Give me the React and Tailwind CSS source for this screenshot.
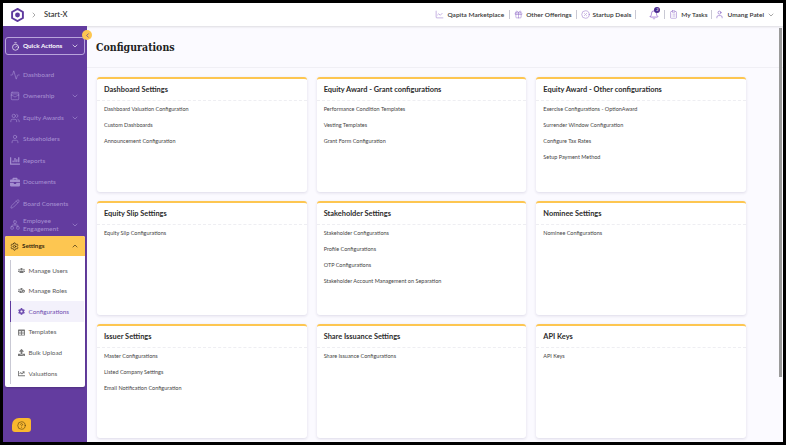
import {
  Activity,
  Bell,
  ChevronDown,
  ChevronLeft,
  ChevronRight,
  ChevronUp,
  CircleHelp,
  ClipboardList,
  Gift,
  LineChart,
  Network,
  Pencil,
  PercentCircle,
  Settings,
  Timer,
  User,
  Users,
  WalletCards,
} from "lucide-react";
import { FaBriefcase, FaChartBar, FaChartLine, FaCog, FaTable, FaUpload, FaUsers, FaUsersCog } from "react-icons/fa";

const navItems = [
  { label: "Dashboard", icon: Activity },
  { label: "Ownership", icon: WalletCards, chevron: true },
  { label: "Equity Awards", icon: Users, chevron: true },
  { label: "Stakeholders", icon: User },
  { label: "Reports", icon: FaChartBar },
  { label: "Documents", icon: FaBriefcase },
  { label: "Board Consents", icon: Pencil },
];

const subItems = [
  { label: "Manage Users", icon: FaUsers },
  { label: "Manage Roles", icon: FaUsersCog },
  { label: "Configurations", icon: FaCog, active: true },
  { label: "Templates", icon: FaTable },
  { label: "Bulk Upload", icon: FaUpload },
  { label: "Valuations", icon: FaChartLine },
];

const cards = [
  {
    title: "Dashboard Settings",
    links: ["Dashboard Valuation Configuration", "Custom Dashboards", "Announcement Configuration"],
  },
  {
    title: "Equity Award - Grant configurations",
    links: ["Performance Condition Templates", "Vesting Templates", "Grant Form Configuration"],
  },
  {
    title: "Equity Award - Other configurations",
    links: [
      "Exercise Configurations - OptionAward",
      "Surrender Window Configuration",
      "Configure Tax Rates",
      "Setup Payment Method",
    ],
  },
  { title: "Equity Slip Settings", links: ["Equity Slip Configurations"] },
  {
    title: "Stakeholder Settings",
    links: [
      "Stakeholder Configurations",
      "Profile Configurations",
      "OTP Configurations",
      "Stakeholder Account Management on Separation",
    ],
  },
  { title: "Nominee Settings", links: ["Nominee Configurations"] },
  {
    title: "Issuer Settings",
    links: ["Master Configurations", "Listed Company Settings", "Email Notification Configuration"],
  },
  { title: "Share Issuance Settings", links: ["Share Issuance Configurations"] },
  { title: "API Keys", links: ["API Keys"] },
];

const Logo = () => (
  <svg width="13" height="14" viewBox="2 1 20 22" fill="none">
    <path d="M12 2.5 20.5 7.2v9.6L12 21.5 3.5 16.8V7.2Z" stroke="#5f3a9e" strokeWidth="3" />
    <circle cx="12" cy="12" r="3.8" fill="#5f3a9e" />
  </svg>
);

const Divider = ({ className = "mx-[4.5px]" }) => <span className={`h-[9px] w-px bg-[#c9c9d4] ${className}`} />;

const TopLink = ({ icon: Icon, label }) => (
  <div className="flex items-center gap-[3px]">
    <Icon size={9} strokeWidth={1.3} className="text-[#8a63c4]" />
    <span className="text-[6.5px] font-semibold text-[#333]">{label}</span>
  </div>
);

const NavRow = ({ label, icon: Icon, chevron }) => (
  <div className="flex h-[21.5px] items-center pl-[7px] pr-[6px] text-[#a38dd0]">
    <Icon size={10} strokeWidth={1.5} className="shrink-0" />
    <span className="ml-[3px] text-[6.5px] font-medium">{label}</span>
    {chevron && <ChevronDown size={8} strokeWidth={2} className="ml-auto mr-[2px]" />}
  </div>
);

const ConfigCard = ({ title, links }) => (
  <div className="rounded-[3px] border-t-[2px] border-[#fdc651] bg-white shadow-[0_1px_3px_rgba(40,30,90,0.14)]">
    <div className="flex h-[22px] items-center border-b border-dashed border-[#eeeef2] px-[7px] pt-[1px] text-[7.4px] font-bold text-[#2c2c2c]">
      {title}
    </div>
    <div className="flex flex-col gap-[7.1px] px-[7px] pt-[4px]">
      {links.map((link) => (
        <div key={link} className="h-[9px] text-[5.5px] leading-[9px] text-[#444]">
          {link}
        </div>
      ))}
    </div>
  </div>
);

export default function App() {
  return (
    <div className="flex h-[445px] w-[786px] flex-col overflow-hidden bg-black p-[3px] font-['Lato','Noto_Sans',sans-serif]">
      {/* Top bar */}
      <header className="z-10 flex h-[23px] shrink-0 items-center bg-white pl-[8px] pr-[8px] shadow-[0_1px_2px_rgba(0,0,0,0.12)]">
        <Logo />
        <ChevronRight size={8} strokeWidth={1.5} className="ml-[6px] text-[#555]" />
        <span className="ml-[6px] text-[7.5px] font-semibold text-[#333]">Start-X</span>
        <div className="ml-auto flex items-center">
          <TopLink icon={LineChart} label="Qapita Marketplace" />
          <Divider />
          <TopLink icon={Gift} label="Other Offerings" />
          <Divider className="mx-[4px]" />
          <TopLink icon={PercentCircle} label="Startup Deals" />
          <Divider className="ml-[4px] mr-[13px]" />
          <div className="relative">
            <Bell size={10} strokeWidth={1.5} className="text-[#7a3fc4]" />
            <span className="absolute -top-[3px] left-[5px] flex h-[6px] w-[6px] items-center justify-center rounded-full bg-[#4a2a8e] text-[4px] text-white">
              2
            </span>
          </div>
          <Divider />
          <TopLink icon={ClipboardList} label="My Tasks" />
          <Divider className="mx-[3.5px]" />
          <div className="flex items-center gap-[3px]">
            <User size={9} strokeWidth={1.3} className="text-[#6a3fb4]" />
            <span className="text-[6.5px] font-semibold text-[#333]">Umang Patel</span>
            <ChevronDown size={8} strokeWidth={1.3} className="text-[#333]" />
          </div>
        </div>
      </header>

      <div className="flex min-h-0 flex-1">
        {/* Sidebar */}
        <aside className="relative z-10 flex w-[84px] shrink-0 flex-col bg-[#633c9f]">
          <button className="absolute -right-[5px] top-[4px] flex h-[10px] w-[10px] items-center justify-center rounded-full bg-[#fdc651] text-[#5f3a9e]">
            <ChevronLeft size={7} strokeWidth={2.5} />
          </button>
          <div className="mx-[2px] mt-[11px] flex h-[18px] items-center rounded-[3px] border border-[#b9a4dc] pl-[5px] pr-[5px] text-white">
            <Timer size={9} strokeWidth={1.8} />
            <span className="ml-[3px] text-[6.3px] font-bold">Quick Actions</span>
            <ChevronDown size={8} strokeWidth={2} className="ml-auto" />
          </div>
          <div className="mt-[9px] flex flex-col">
            {navItems.map((item) => (
              <NavRow key={item.label} {...item} />
            ))}
            <div className="flex h-[21.5px] items-center pl-[7px] pr-[6px] text-[#a38dd0]">
              <Network size={10} strokeWidth={1.5} className="shrink-0" />
              <span className="ml-[3px] text-[6.5px] font-medium leading-[8px]">
                Employee
                <br />
                Engagement
              </span>
              <ChevronDown size={8} strokeWidth={2} className="ml-auto mr-[2px]" />
            </div>
          </div>
          <div className="mx-[2px] overflow-hidden rounded-[2px] bg-white shadow-[0_1px_2px_rgba(0,0,0,0.2)]">
            <div className="flex h-[20px] items-center bg-[#fdc651] pl-[5px] pr-[6px] text-[#3a2b10]">
              <Settings size={9} strokeWidth={2} />
              <span className="ml-[3px] text-[6.3px] font-bold">Settings</span>
              <ChevronUp size={8} strokeWidth={2} className="ml-auto" />
            </div>
            <div className="pb-[3px] pl-[5px] pr-[1px] pt-[4px]">
              <div className="flex flex-col border-l border-[#c9c9d4]">
                {subItems.map(({ label, icon: Icon, active }) => (
                  <div
                    key={label}
                    className={
                      active
                        ? "-ml-px flex h-[20.6px] items-center border-l-[1.5px] border-[#5f3a9e] bg-[#f3f1fb] pl-[7px] text-[#6f4db0]"
                        : "flex h-[20.6px] items-center pl-[7px] text-[#5b5b5b]"
                    }
                  >
                    <Icon size={7} className={active ? "" : "text-[#777]"} />
                    <span className="ml-[3.5px] text-[6.3px]">{label}</span>
                  </div>
                ))}
              </div>
            </div>
          </div>
          <button className="absolute bottom-[10px] left-[9px] flex h-[14px] w-[19px] items-center justify-center rounded-[3px] rounded-tl-[7px] bg-[#fab82e] text-[#4a3610]">
            <CircleHelp size={9} strokeWidth={1.5} />
          </button>
        </aside>

        {/* Main */}
        <main className="relative flex min-w-0 flex-1 flex-col overflow-hidden bg-[#fbfaff]">
          <div className="flex h-[42px] shrink-0 items-center border-b border-[#f0eff5] pl-[9px]">
            <h1 className="mt-[3px] font-['DejaVu_Serif_Condensed','DejaVu_Serif',serif] text-[10.5px] font-bold text-[#222]">
              Configurations
            </h1>
          </div>
          <div className="grid w-[659px] grid-cols-3 grid-rows-[115px_114px_114px] gap-x-[10px] gap-y-[9px] pl-[10px] pt-[9px]">
            {cards.map((card) => (
              <ConfigCard key={card.title} {...card} />
            ))}
          </div>
          <div className="absolute bottom-[65px] right-[1px] top-[2px] w-[3px] bg-[#9a9a9a]" />
        </main>
      </div>
    </div>
  );
}
